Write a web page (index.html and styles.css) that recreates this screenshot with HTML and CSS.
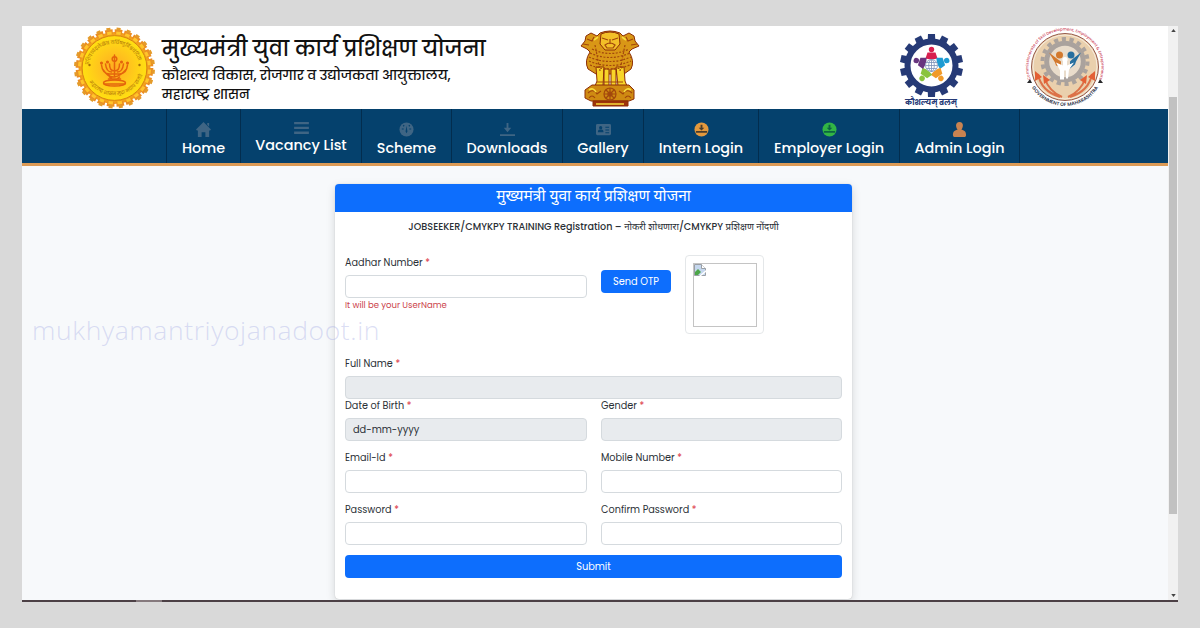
FILE: index.html
```html
<!DOCTYPE html>
<html lang="mr">
<head>
<meta charset="utf-8">
<title>मुख्यमंत्री युवा कार्य प्रशिक्षण योजना</title>
<link rel="stylesheet" href="styles.css">
</head>
<body>
<div class="window">
  <div class="page">
    <header class="masthead">
      <svg class="seal" viewBox="0 0 84 80">
        <defs>
          <radialGradient id="gold"><stop offset="0" stop-color="#ffab20"/><stop offset=".5" stop-color="#ffc51c"/><stop offset="1" stop-color="#ffe011"/></radialGradient>
          <path id="sealArc" d="M17 49A26 26 0 1 1 67 49"/>
          <path id="sealLow" d="M13 45A30 30 0 0 0 71 45"/>
        </defs>
        <g transform="translate(42.500 40)">
          <circle r="36" fill="#f3a01b"/>
          <circle r="36.600" fill="none" stroke="#eb8d24" stroke-width="4.500" stroke-dasharray="7.500 2.080"/>
          <circle r="39" fill="none" stroke="#e49b2a" stroke-width="3" stroke-dasharray="4 6.210" stroke-dashoffset="-1.800"/>
          <circle r="35" fill="none" stroke="#ffc52b" stroke-width="3" stroke-dasharray="4.500 4.663" stroke-dashoffset="-1.500"/>
          <circle r="32.400" fill="url(#gold)" stroke="#d88412" stroke-width="1"/>
          <g fill="none" stroke="#e4640c" stroke-width="1.500" stroke-linecap="round">
            <path d="M-13-3q1 9 8 9h10q7 0 8-9M-9-4q1 8 6 8M9-4q-1 8-6 8M-5-4q0 7 5 7t5-7M0-13V9M-6 11h12M-10 16h20M-5 9q5 5 10 0M-12 1q6 9 12 8t12-8"/>
            <circle cy="-9" r="2.300"/><circle cx="-13" cy="-5" r=".8"/><circle cx="13" cy="-5" r=".8"/><circle cx="-7" cy="-6" r=".8"/><circle cx="7" cy="-6" r=".8"/>
            <ellipse cy="15" rx="11" ry="3"/>
          </g>
          <circle cx="-25" cy="-3" r="1.200" fill="#a87108"/><circle cx="25" cy="-3" r="1.200" fill="#a87108"/>
        </g>
        <text class="seal-text"><textPath href="#sealArc" startOffset="12">प्रतिपच्चंद्रलेखेव वर्धिष्णुर्विश्ववंदिता</textPath></text>
        <text class="seal-text"><textPath href="#sealLow" startOffset="10">महाराष्ट्र शासन मुद्रा भद्राय राजते</textPath></text>
      </svg>
      <div class="titles">
        <h1>मुख्यमंत्री युवा कार्य प्रशिक्षण योजना</h1>
        <p>कौशल्य विकास, रोजगार व उद्योजकता आयुक्तालय,</p>
        <p>महाराष्ट्र शासन</p>
      </div>
      <svg class="lions" viewBox="0 0 60 78">
        <g stroke="#8d2e06" stroke-width="1" stroke-linejoin="round">
          <path fill="#d99716" d="M20 4q10-4 20 0l3 3 6-3 5 3 1 5 4 5-7 3-3 3q6 9 2 17l-7 5H16L8 40q-4-8 2-17l-3-3-6-3 4-5 1-5 5-3 6 3z"/>
          <path fill="#f8d529" d="M16 38h8l-1 19h-8l2-5zM24 40h5v18h-5zM31 40h5v18h-5zM36 38h8l1 14 2 5h-9z"/>
          <path fill="#cf8a12" d="M12 56h37l5 5v9l-5 2H11l-6-3v-8z"/>
          <path fill="#9f340b" d="M13 72h35v5H13z"/>
          <path fill="#f3bf28" d="M21 5q9-4 18 0l1 10-5 6H25l-5-6z"/>
        </g>
        <g fill="none" stroke="#a2470c" stroke-width="1.200">
          <path d="M22 9l6 2M38 9l-6 2M30 10v5M25 16q5-4 10 0l-2 3h-6zM7 10l5 2 2-4M53 10l-5 2-2-4M3 15l6 1M57 15l-6 1"/>
          <g stroke-dasharray="2 1.500"><path d="M12 20q18 9 37 0M10 24q20 9 40 0M9 28q21 9 42 0M9 32q21 9 42 0M10 36q20 8 40 0M15 16q3 15 5 26M45 16q-3 15-5 26"/></g>
          <circle cx="30" cy="65" r="6"/><circle cx="30" cy="65" r="2"/><path d="M30 59v12M24 65h12M26 61l8 8M34 61l-8 8"/>
          <path d="M8 64q5-5 9 1l4-3M9 69q3-4 6 0M52 64q-5-5-9 1l-4-3M51 69q-3-4-6 0M17 53h26"/>
        </g>
        <path stroke="#f7dd3d" stroke-width="1.600" fill="none" d="M9 61q4-3 7 2M51 61q-4-3-7 2M18 8l-4 3M42 8l4 3M16 75h28"/>
      </svg>
      <svg class="skill" viewBox="0 0 68 74">
        <g transform="translate(34.500 31.500)">
          <g fill="#263a76"><path id="t" d="M-3.800-25l.3-6.500h7l.3 6.500z"/><use href="#t" transform="rotate(25.700)"/><use href="#t" transform="rotate(51.400)"/><use href="#t" transform="rotate(77.100)"/><use href="#t" transform="rotate(102.800)"/><use href="#t" transform="rotate(128.500)"/><use href="#t" transform="rotate(154.200)"/><use href="#t" transform="rotate(180)"/><use href="#t" transform="rotate(205.700)"/><use href="#t" transform="rotate(231.400)"/><use href="#t" transform="rotate(257.100)"/><use href="#t" transform="rotate(282.800)"/><use href="#t" transform="rotate(308.500)"/><use href="#t" transform="rotate(334.200)"/></g>
          <circle r="24" fill="#fff" stroke="#263a76" stroke-width="6"/>
          <g fill="#d81f4f"><circle cy="-16" r="2.700"/><path d="M-4-13h8l2 6-5 1h-2l-5-1z"/></g>
          <g fill="#1e9bd2" transform="rotate(72)"><circle cy="-16" r="2.700"/><path d="M-4-13h8l2 6-5 1h-2l-5-1z"/></g>
          <g fill="#f19a28" transform="rotate(144)"><circle cy="-16" r="2.700"/><path d="M-4-13h8l2 6-5 1h-2l-5-1z"/></g>
          <g fill="#8ac43f" transform="rotate(216)"><circle cy="-16" r="2.700"/><path d="M-4-13h8l2 6-5 1h-2l-5-1z"/></g>
          <g fill="#68357f" transform="rotate(288)"><circle cy="-16" r="2.700"/><path d="M-4-13h8l2 6-5 1h-2l-5-1z"/></g>
          <circle r="6.300" fill="#fff"/>
          <g fill="none" stroke="#7b91b8" stroke-width=".8"><circle r="6"/><ellipse rx="2.800" ry="6"/><path d="M-6 0H6M0-6V6M-5-3H5M-5 3H5"/></g>
        </g>
        <text class="skill-text" x="34" y="71" text-anchor="middle">कौशल्यम् बलम्</text>
      </svg>
      <svg class="govt" viewBox="0 0 84 80">
        <defs>
          <path id="govTop" d="M7.700 52.500A36.500 36.500 0 1 1 76.300 52.500"/>
          <path id="govLow" d="M6.700 56.500A39 39 0 0 0 77.300 56.500"/>
        </defs>
        <circle cx="42" cy="40" r="33.500" fill="#ead0ad" stroke="#8a4a3a" stroke-width=".9"/>
        <circle cx="42" cy="40" r="32" fill="none" stroke="#fff" stroke-width=".6"/>
        <g transform="translate(42 34.500)">
          <circle r="22.500" fill="none" stroke="#aaa29d" stroke-width="4" stroke-dasharray="4.200 3.654"/>
          <circle r="18.300" fill="#e9dccb" stroke="#aaa29d" stroke-width="5"/>
          <circle cx="-5.500" cy="-6.500" r="3.500" fill="#d3792d"/><circle cx="6" cy="-6.500" r="3.500" fill="#276f9f"/>
          <path fill="#d3792d" d="M-16-9l9 7 3 2v6l-5-2-1-3z"/><path fill="#276f9f" d="M16-9l-9 7-2 2v7l5-4 1-3z"/>
          <path fill="#fff" d="M-9 1l7 3V0q2-5 4 0v4l7-3-5 7-1 9H1V9h-2v9h-4v-9z"/><circle cy="-2" r="2.600" fill="#fff"/>
        </g>
        <g fill="none" stroke="#dc7148" stroke-width="2"><path d="M15 47q3 17 22 23M69 47q-3 17-22 23M22 52q4 12 17 18M62 52q-4 12-17 18"/></g>
        <path fill="#e36035" d="M12 44l7 6-7 4zM72 44l-7 6 7 4zM20 48l7 5-6 4zM64 48l-7 5 6 4z"/>
        <path fill="#29292b" d="M4 56l3-4 2 4zM80 56l-3-4-2 4z"/>
        <text class="gov-top"><textPath href="#govTop">Commissionerate of Skill Development, Employment &amp; Entrepreneurship</textPath></text>
        <text class="gov-low" text-anchor="middle"><textPath href="#govLow" startOffset="50%">GOVERNMENT OF MAHARASHTRA</textPath></text>
      </svg>
    </header>

    <nav class="menu">
      <a class="item home"><svg viewBox="0 0 16 16"><path d="M8 0l8 8-1 1h-1v7h-4v-5H6v5H2V9H1L0 8zM12 1h2v4l-2-2z"/></svg><span>Home</span></a>
      <a class="item vacancy"><svg viewBox="0 0 16 13"><path d="M0 0h16v2.500H0zM0 5.200h16v2.500H0zM0 10.400h16v2.500H0z"/></svg><span>Vacancy List</span></a>
      <a class="item scheme"><svg viewBox="0 0 16 16"><circle cx="8" cy="8" r="7.500"/><path class="cut" d="M7 10l1-6 1 6-1 2zM3 7h2v1H3zM11 7h2v1h-2zM4 4l1-1 1 1-1 1zM10 4l1-1 1 1-1 1z"/></svg><span>Scheme</span></a>
      <a class="item downloads"><svg viewBox="0 0 16 16"><path d="M7 1h2v5h3L8 11 4 6h3zM0 13h16v2H0z"/></svg><span>Downloads</span></a>
      <a class="item gallery"><svg viewBox="0 0 16 16"><rect y="2" width="16" height="12" rx="1.500"/><path class="cut" d="M2 11q0-3 2-3h2q2 0 2 3zM10 5h4v1h-4zM10 8h4v1h-4zM10 11h4v1h-4z"/><circle class="cut" cx="5" cy="6" r="1.700"/></svg><span>Gallery</span></a>
      <a class="item intern"><svg viewBox="0 0 16 16"><circle cx="8" cy="8" r="7.500"/><path class="cut" d="M7 3h2v3h2L8 9 5 6h2zM2 9.500h12v2H2z"/></svg><span>Intern Login</span></a>
      <a class="item employer"><svg viewBox="0 0 16 16"><circle cx="8" cy="8" r="7.500"/><path class="cut" d="M7 3h2v3h2L8 9 5 6h2zM2 9.500h12v2H2z"/></svg><span>Employer Login</span></a>
      <a class="item admin"><svg viewBox="0 0 16 16"><path d="M8 0c5 0 4 6 2 8 4 1 5 3 5 6 0 2-2 2-3 2H4c-1 0-3 0-3-2 0-3 1-5 5-6C4 6 3 0 8 0z"/></svg><span>Admin Login</span></a>
    </nav>

    <main class="content">
      <form class="card">
        <h2>मुख्यमंत्री युवा कार्य प्रशिक्षण योजना</h2>
        <h3>JOBSEEKER/CMYKPY TRAINING Registration – <span class="deva">नोकरी शोधणारा</span>/CMYKPY <span class="deva">प्रशिक्षण नोंदणी</span></h3>
        <div class="fields">
          <div class="top-row">
            <div class="field aadhar">
              <label>Aadhar Number <i>*</i></label>
              <div class="input"></div>
              <small>It will be your UserName</small>
            </div>
            <div class="button otp">Send OTP</div>
            <div class="photo">
              <div class="missing">
                <svg viewBox="0 0 12 12"><path fill="#c5d7ee" stroke="#9a9fa5" d="M.5.5h7l4 4v7H.5z"/><path fill="#fff" stroke="#9a9fa5" d="M7.500.5v4h4"/><path fill="#4ca648" d="M1 11V8l3-3 3 3-3 3z"/><path fill="#fff" d="M5 12l7-6v2l-5 4z"/></svg>
              </div>
            </div>
          </div>
          <div class="field full"><label>Full Name <i>*</i></label><div class="input off"></div></div>
          <div class="grid">
            <div class="field"><label>Date of Birth <i>*</i></label><div class="input off">dd-mm-yyyy</div></div>
            <div class="field"><label>Gender <i>*</i></label><div class="input off"></div></div>
            <div class="field"><label>Email-Id <i>*</i></label><div class="input"></div></div>
            <div class="field"><label>Mobile Number <i>*</i></label><div class="input"></div></div>
            <div class="field"><label>Password <i>*</i></label><div class="input"></div></div>
            <div class="field"><label>Confirm Password <i>*</i></label><div class="input"></div></div>
          </div>
          <div class="button submit">Submit</div>
        </div>
      </form>
    </main>
  </div>
  <div class="scrollbar">
    <svg viewBox="0 0 6 4"><path d="M0 4l3-4 3 4z"/></svg>
    <div class="thumb"></div>
    <svg viewBox="0 0 6 4"><path d="M0 0h6L3 4z"/></svg>
  </div>
  <div class="watermark">mukhyamantriyojanadoot.in</div>
  <div class="taskbar-tip"></div>
</div>
</body>
</html>
```
FILE: styles.css
```css
* { box-sizing: border-box; }
body {
  margin: 0;
  height: 628px;
  padding: 26px 22px;
  overflow: hidden;
  background: #d9d9d9;
  font-family: Poppins, Inter, "Noto Sans", sans-serif;
  color: #2a3036;
}
.window {
  position: relative;
  display: flex;
  width: 1156px;
  height: 576px;
  border-bottom: 2px solid #4c4045;
  background: #f7f9fb;
}
.page { width: 1146px; height: 574px; overflow: hidden; }
.masthead { display: flex; height: 83px; padding-left: 50px; background: #fff; }
.seal { width: 84px; height: 80px; margin-top: 2px; overflow: visible; }
.seal-text { font-size: 4.8px; fill: #a86b08; }
.titles { width: 420px; padding: 8px 0 0 6px; color: #111; white-space: nowrap; }
.titles h1 { margin: 0 0 3px; font-size: 21.2px; line-height: 30px; font-weight: 500; }
.titles p { margin: 0; font-size: 13.35px; line-height: 18.5px; font-weight: 500; }
.lions { width: 60px; height: 78px; margin: 3px 0 0 4px; }
.skill { width: 68px; height: 74px; margin: 8px 0 0 257px; overflow: visible; }
.skill-text { font-size: 7.4px; font-weight: 700; fill: #263a76; }
.govt { width: 84px; height: 80px; margin: 1px 0 0 58px; overflow: visible; }
.gov-top { font-size: 4px; font-weight: 500; fill: #cc4357; }
.gov-low { font-size: 4.8px; font-weight: 600; fill: #33374b; }

.menu {
  display: flex;
  height: 57px;
  padding-left: 144px;
  background: #05416d;
  border-bottom: 3px solid #dc9a55;
}
.item {
  display: flex;
  flex-direction: column;
  align-items: center;
  padding-top: 13px;
  border-right: 1px solid #032d4e;
  color: #fff;
  font-size: 14.4px;
  line-height: 19px;
  font-weight: 500;
  white-space: nowrap;
}
.item svg { width: 15px; height: 15px; margin-bottom: 1.5px; fill: #3f6584; }
.item .cut { fill: #05416d; }
.home { width: 75px; border-left: 1px solid #032d4e; }
.vacancy { width: 121px; }
.item.vacancy svg { height: 12px; }
.scheme { width: 90px; }
.downloads { width: 111px; }
.gallery { width: 81px; }
.intern { width: 115px; }
.employer { width: 141px; }
.admin { width: 120px; }
.item.intern svg { fill: #e4993d; }
.intern .cut { fill: #4a3d2c; }
.item.employer svg { fill: #32b545; }
.employer .cut { fill: #0c6541; }
.item.admin svg { fill: #c98351; }

.content { display: flex; padding: 18px 0 0 313px; }
.card {
  width: 517px;
  height: 415px;
  border-radius: 4px;
  background: #fff;
  box-shadow: 0 0 1px rgba(0, 0, 0, .25), 0 3px 10px rgba(0, 0, 0, .15);
  overflow: hidden;
}
.card h2 {
  margin: 0;
  height: 28px;
  background: #0d6efd;
  color: #fff;
  font-family: "Noto Sans Devanagari", "Lohit Devanagari", "Noto Sans", sans-serif;
  font-size: 15.5px;
  line-height: 26px;
  font-weight: 400;
  text-align: center;
}
.card h3 { margin: 6px 0 0; font-size: 9.6px; line-height: 18px; font-weight: 500; text-align: center; white-space: nowrap; }
.deva { font-family: "Noto Sans Devanagari", "Lohit Devanagari", "Noto Sans", sans-serif; font-weight: 400; }
.fields { padding: 18px 10px 0; }
.top-row { display: flex; height: 101px; }
label { display: block; height: 20px; font-size: 9.7px; line-height: 15px; white-space: nowrap; }
label i { color: #dc3545; font-style: normal; }
.input {
  height: 23px;
  padding-left: 7px;
  border: 1px solid #d5dade;
  border-radius: 4px;
  background: #fff;
  font-size: 9.8px;
  line-height: 21px;
}
.input.off { background: #e8ebee; }
.aadhar { width: 242px; }
small { display: block; font-size: 8.5px; line-height: 14px; color: #cb3f4b; white-space: nowrap; }
.button {
  height: 23px;
  border-radius: 4px;
  background: #0d6efd;
  color: #fff;
  font-size: 9.8px;
  line-height: 23px;
  text-align: center;
}
.otp { width: 70px; margin: 15px 14px 0; }
.photo { width: 79px; height: 79px; padding: 7px; border: 1px solid #e4e7e9; border-radius: 4px; }
.missing { width: 64px; height: 64px; border: 1px solid #c4c4c4; }
.missing svg { display: block; width: 12px; height: 12px; }
.grid { display: grid; grid-template-columns: 242px 241px; column-gap: 14px; row-gap: 9px; margin: -1px 0 10px; }

.scrollbar {
  display: flex;
  flex-direction: column;
  align-items: center;
  width: 10px;
  padding: 3px 0;
  background: #f1f1f1;
}
.scrollbar svg { width: 5px; height: 3px; fill: #444; }
.thumb { width: 8px; height: 417px; margin: 65px 0 auto; background: #c1c1c1; }
.watermark {
  position: absolute;
  left: 10px;
  top: 286px;
  color: rgba(170, 176, 230, .42);
  font-family: "Open Sans", sans-serif;
  font-weight: 300;
  font-size: 26.5px;
  line-height: 36px;
  letter-spacing: .6px;
}
.taskbar-tip { position: absolute; left: 114px; bottom: -2px; width: 26px; height: 2px; background: #85797d; }
```
